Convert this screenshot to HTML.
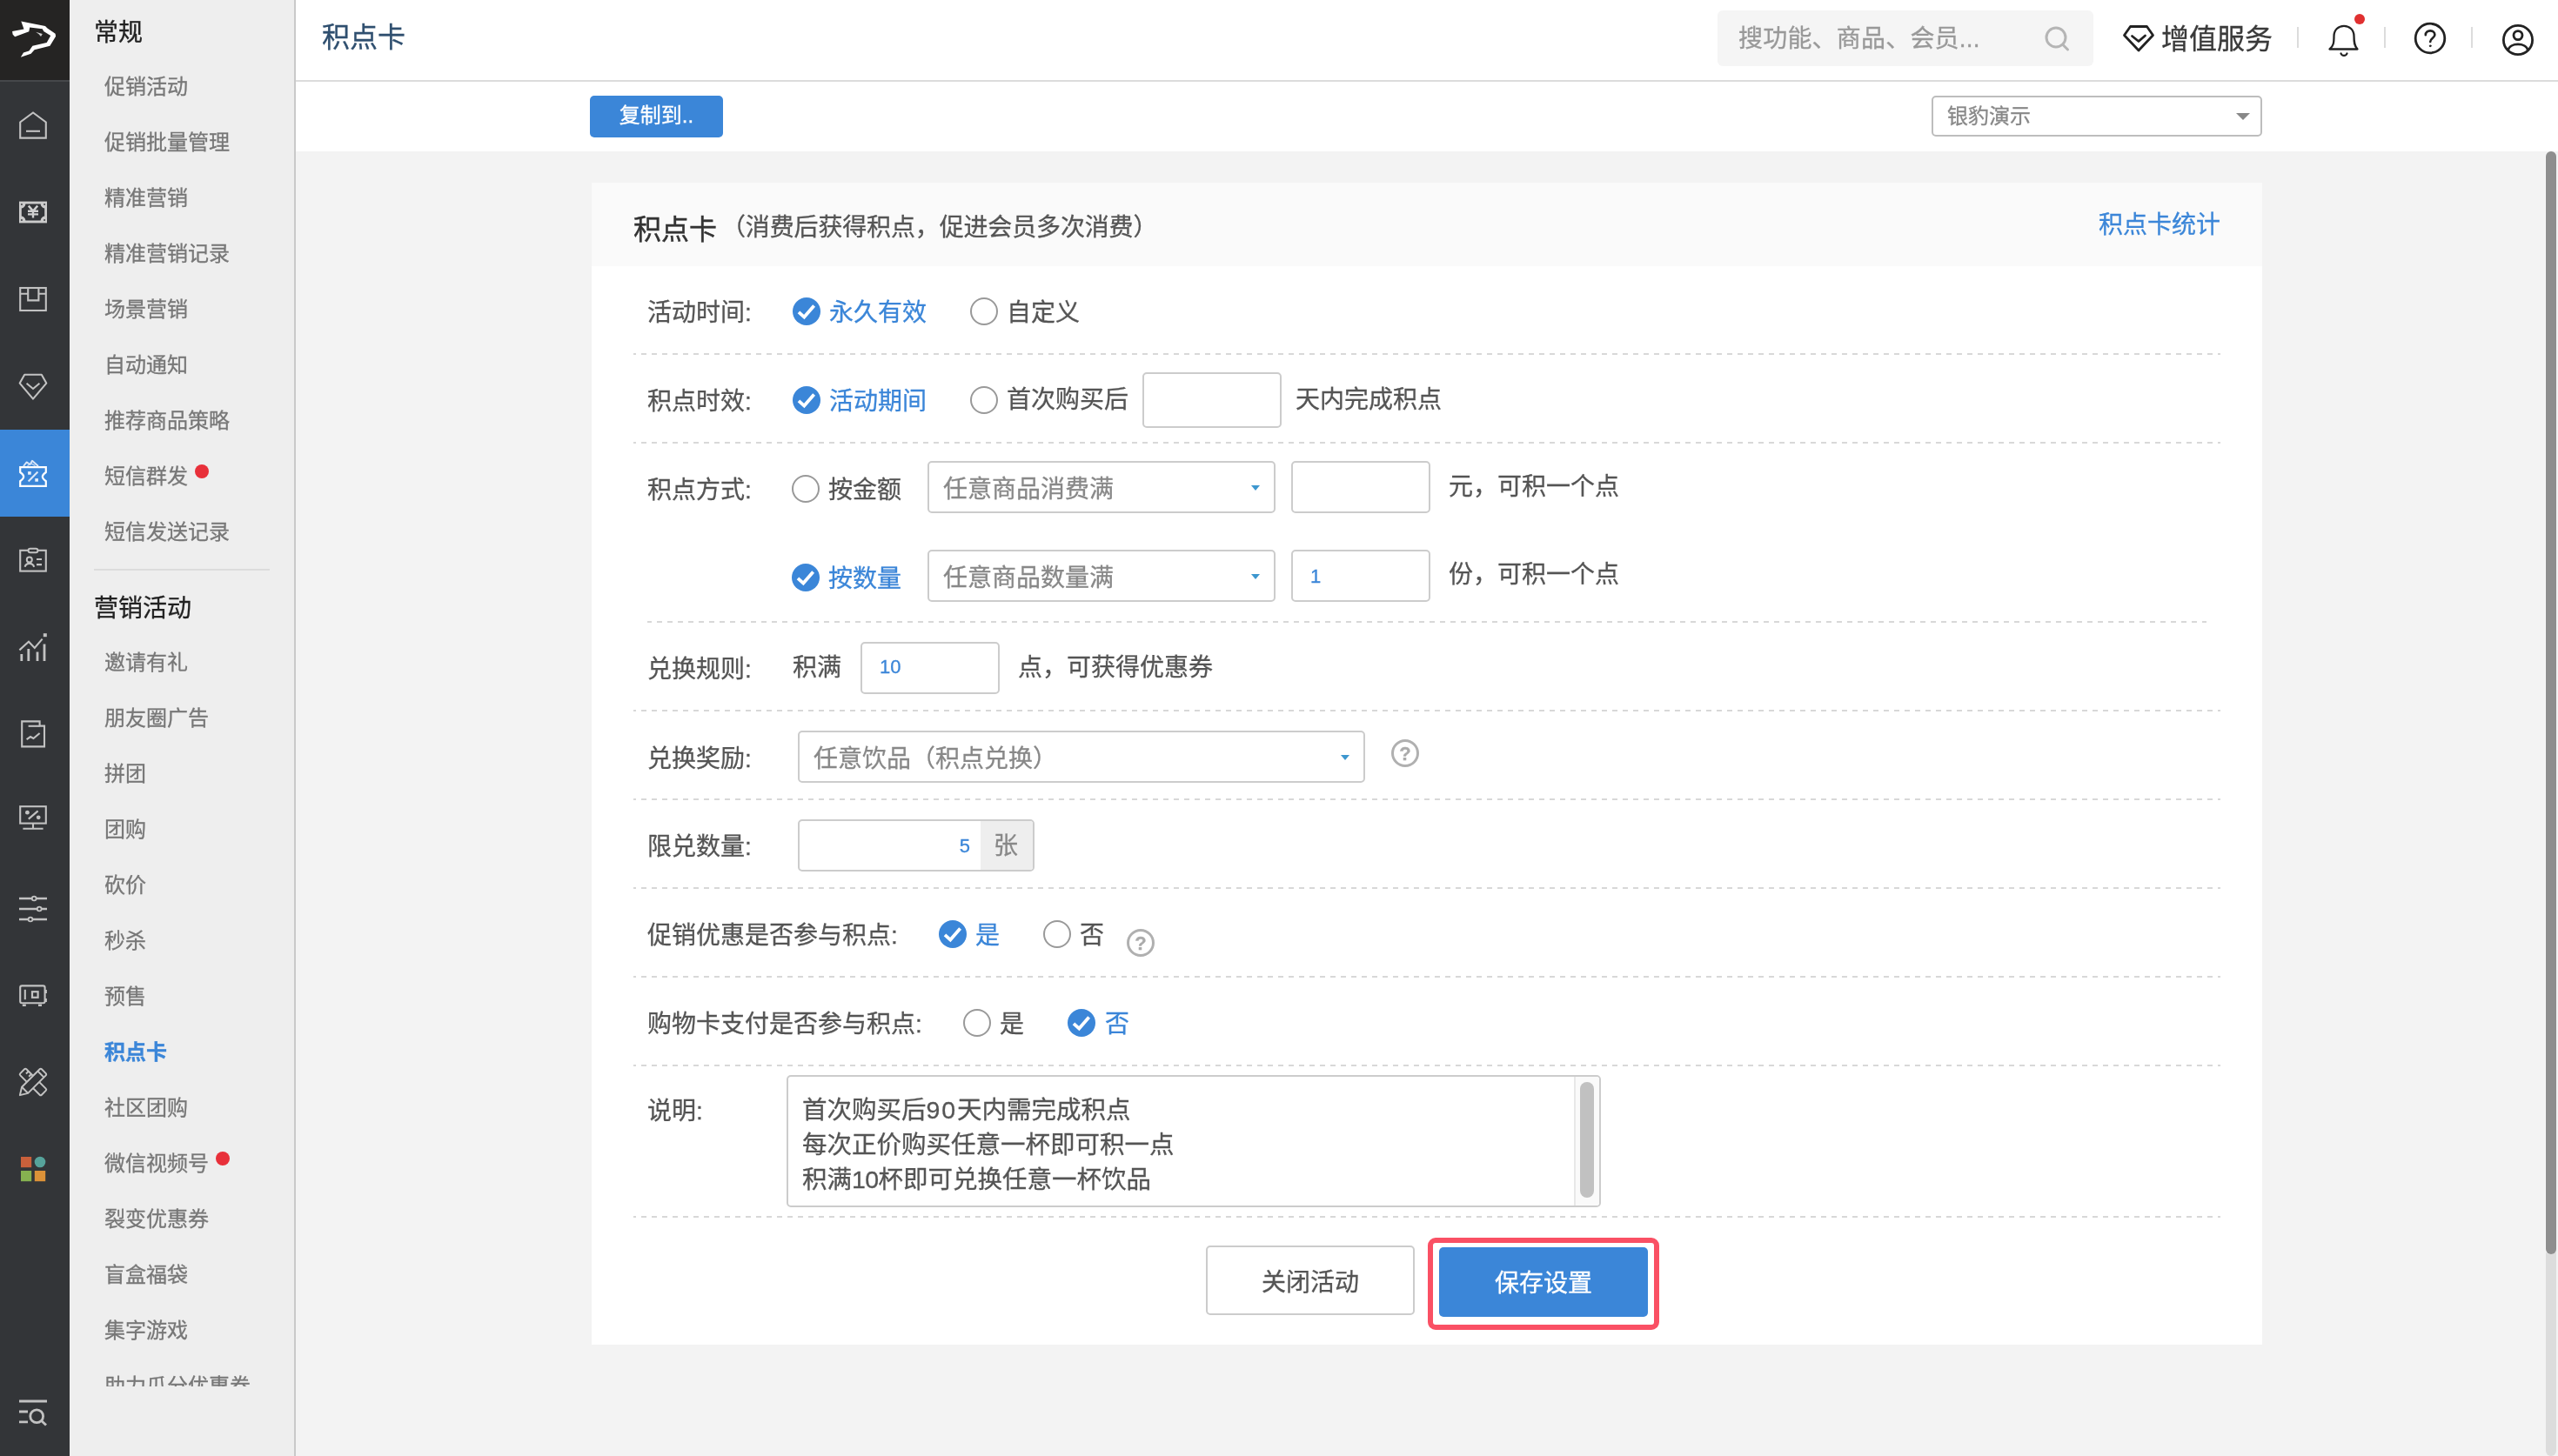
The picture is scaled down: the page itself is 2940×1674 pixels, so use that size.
<!DOCTYPE html>
<html lang="zh-CN">
<head>
<meta charset="utf-8">
<title>积点卡</title>
<style>
*{box-sizing:border-box;margin:0;padding:0}
html,body{width:2940px;height:1674px;overflow:hidden;background:#f3f3f3}
body{font-family:"Liberation Sans","Noto Sans CJK SC",sans-serif;color:#555;font-size:28px;position:relative;will-change:transform;-webkit-text-stroke:0.3px}
.abs,.t,.dash,.rc,.ru,.inp,.sel{position:absolute}
.t{white-space:nowrap;height:40px;line-height:40px}
#nav1{position:absolute;left:0;top:0;width:80px;height:1674px;background:#333538}
#logo{position:absolute;left:0;top:0;width:80px;height:92px;background:#252423}
#logoline{position:absolute;left:0;top:92px;width:80px;height:2px;background:#46484b}
#act{position:absolute;left:0;top:494px;width:80px;height:100px;background:#3b86d8}
#nav2{position:absolute;left:80px;top:0;width:260px;height:1674px;background:#eeeeee;border-right:2px solid #c9c9c9}
#nav2clip{position:absolute;left:0;top:0;width:258px;height:1594px;overflow:hidden}
.h{position:absolute;left:28px;font-size:28px;color:#222;height:40px;line-height:40px;white-space:nowrap}
.i{position:absolute;left:40px;font-size:24px;color:#777;height:36px;line-height:36px;white-space:nowrap}
.i.on{color:#3b86d8;font-weight:bold}
.dot{position:absolute;width:16px;height:16px;border-radius:50%;background:#e8303a}
#hdr{position:absolute;left:340px;top:0;width:2600px;height:92px;background:#fff}
#hdrline{position:absolute;left:340px;top:92px;width:2600px;height:2px;background:#dcdcdc}
#tool{position:absolute;left:340px;top:94px;width:2600px;height:80px;background:#fff}
#card{position:absolute;left:680px;top:210px;width:1920px;height:1336px;background:#fff}
#cardh{position:absolute;left:680px;top:210px;width:1920px;height:96px;background:#fafafa}
.dash{height:2px;background-image:linear-gradient(90deg,#d8d8d8 6px,transparent 6px);background-size:12px 2px;background-position:9px 0;left:728px;width:1824px}
.rc{width:32px;height:32px}
.ru{width:32px;height:32px;border-radius:50%;border:2px solid #999;background:#fff}
.inp{border:2px solid #ccc;border-radius:5px;background:#fff}
.sel{border:2px solid #ccc;border-radius:5px;background:#fff;color:#888;font-size:28px;white-space:nowrap}
.sel span{position:absolute;left:16px;top:2px}
.sel i{position:absolute;right:16px;width:0;height:0;border-left:5.5px solid transparent;border-right:5.5px solid transparent;border-top:6.5px solid #3d97cf}
.b{color:#3b86d8}
.num{font-size:22px;color:#3b86d8}
svg{position:absolute;overflow:visible}
</style>
</head>
<body>
<div id="nav1">
<div id="logo"></div><div id="logoline"></div><div id="act"></div>
<svg width="80" height="1674" viewBox="0 0 80 1674" fill="none" stroke="#c2c2c2" stroke-width="2.1" style="left:0;top:0">
<g stroke="none" fill="#fff" style="filter:blur(0.45px)"><path d="M14.1 36.0 L27.5 33.4 L24.3 24.4 L31.7 26.1 L52.0 30.0 L54.5 32.4 L63.6 38.8 L64.1 41.7 L57.4 52.8 L39.6 57.3 L35.6 61.7 L23.8 65.8 L27.0 60.6 L33.4 58.4 L37.4 52.8 L53.7 48.9 L58.2 41.1 L50.2 35.9 L48.8 33.2 L34.2 31.4 L33.3 36.3 L17.1 42.3 L14.6 39.6 Z"/><path d="M41.1 36.7 L48.8 39.0 L47.0 41.9 L44.6 39.2 Z" fill="#cfcfcf"/></g>
<path d="M23.2 158.6 V140.5 L38 129.5 L52.8 140.5 V158.6 Z"/><path d="M30 150.8 H46"/>
<rect x="22" y="231.6" width="32" height="24.8" fill="#cbcbcb" stroke="none"/><path d="M29.4 234.4 H46.6 Q47.2 238.6 51.2 239.4 V248.6 Q47.2 249.4 46.6 253.6 H29.4 Q28.8 249.4 24.8 248.6 V239.4 Q28.8 238.6 29.4 234.4 Z" fill="#333538" stroke="none"/><g fill="#4a4c4f" stroke="none"><circle cx="24.9" cy="235" r="1.1"/><circle cx="51.1" cy="235" r="1.1"/><circle cx="24.9" cy="253" r="1.1"/><circle cx="51.1" cy="253" r="1.1"/></g><path d="M32.8 236.6 L38 242.6 L43.2 236.6 M32 242.8 H44 M32 246.4 H44 M38 242.6 V250.4" stroke-width="2.4" stroke="#d0d0d0"/>
<rect x="23.2" y="331" width="29.6" height="26"/><path d="M23.2 337.8 H32 M44.6 337.8 H52.8 M32.2 331 V345.4 H44.4 V331"/>
<path d="M28.2 430.8 H47.8 L53.3 440.6 L38 458.6 L22.7 440.6 Z" stroke-linejoin="round"/><path d="M30.6 440.8 L38 447 L45.4 440.8"/>
<g stroke="#fff" stroke-width="2.2"><path d="M23.2 537.2 H52.8 V543 Q44.8 548.1 52.8 553.2 V558.8 H23.2 V553.2 Q31.2 548.1 23.2 543 Z"/><path d="M27 536 L30.6 531.4 L34.6 534 L37 529.8 L44 536" stroke-width="1.9" stroke="#d9e6f8" stroke-linejoin="round"/><path d="M31.5 535.5 L36 533 L40.5 535.5" stroke-width="1.4" stroke="#c9dcf5"/><path d="M32.6 553.6 L43.4 542.6" stroke-width="2.1" stroke="#dbe8f8"/><rect x="32.1" y="542.1" width="3.6" height="3.6" fill="#e9f1fb" stroke="none"/><rect x="40.3" y="550.1" width="3.6" height="3.6" fill="#e9f1fb" stroke="none"/></g>
<rect x="23.2" y="632.8" width="29.6" height="23.8"/><rect x="32.6" y="630.8" width="10.8" height="4.4" rx="2.2" fill="#333538" stroke-width="2"/><circle cx="33.8" cy="643.4" r="3" stroke-width="2"/><path d="M28.6 651.8 C30.2 646.6 37.4 646.6 39.2 651.8" stroke-width="2.1"/><path d="M42 643 H48 M42 649.2 H48" stroke-width="2.2"/>
<path d="M24.8 760 V752 M32.8 760 V746 M43 760 V749.4 M51 760 V740.4" stroke-width="2.8"/><path d="M22.4 747.4 L33 737.8 L39.8 745 L48.6 734.6"/><rect x="49.8" y="728.2" width="4" height="4" fill="#c2c2c2" stroke="none"/>
<path d="M25.2 829.4 H45.6 V834.6 H51 V858.4 H25.2 Z"/><path d="M32.6 834.8 H45.6"/><path d="M30.6 850.2 L35 847 L38.4 849 L45.6 843" stroke-width="2.2"/>
<rect x="23.2" y="927.2" width="29.6" height="19.4"/><path d="M38 946.6 V952.6 M26.4 952.8 H49.6"/><path d="M32.8 941.6 L43.6 932.4" stroke-width="2.2"/><circle cx="31.4" cy="934.2" r="2.4" fill="#c2c2c2" stroke="none"/><circle cx="44.2" cy="939.8" r="2.4" fill="#c2c2c2" stroke="none"/>
<path d="M22 1033 H54 M22 1045 H54 M22 1057 H54" stroke-width="2.6"/><circle cx="39.2" cy="1033" r="2.4" fill="#333538" stroke-width="1.8"/><circle cx="45.2" cy="1045" r="2.4" fill="#333538" stroke-width="1.8"/><circle cx="35" cy="1057" r="2.4" fill="#333538" stroke-width="1.8"/>
<rect x="23.2" y="1133.4" width="28.4" height="19.8" rx="2"/><path d="M28.8 1137.8 V1149.2"/><rect x="37" y="1140.2" width="6.6" height="6.6" stroke-width="2.2"/><path d="M27.8 1154.6 V1157 M46 1154.6 V1157" stroke-width="4"/><path d="M52.8 1138 V1142 M52.8 1148 V1152" stroke-width="2.2"/>
<g stroke-width="2" stroke-linejoin="round"><g transform="rotate(45 38 1244)"><rect x="20.6" y="1239" width="34.8" height="10" rx="1.6"/><path d="M25.6 1239 V1243 M30.2 1239 V1243"/></g><g transform="rotate(-45 38 1244)"><path d="M24.8 1239 H53.8 a1.6 1.6 0 0 1 1.6 1.6 V1247.4 a1.6 1.6 0 0 1 -1.6 1.6 H24.8 L16.6 1244 Z" fill="#333538"/><path d="M24.8 1239 V1249 M50.6 1239 V1249"/></g></g>
<g stroke="none"><rect x="24" y="1330" width="12.2" height="12.2" fill="#c9603b"/><circle cx="46" cy="1336" r="6.3" fill="#56a39b"/><rect x="24" y="1346" width="12.2" height="12.2" fill="#86b150"/><rect x="39.8" y="1346" width="12.4" height="12.2" fill="#dc9238"/></g>
<path d="M22 1611 H54 M22 1623 H32 M22 1634.8 H32" stroke-width="2.8"/><circle cx="42.2" cy="1628.2" r="7.4" stroke-width="2.8"/><path d="M47.6 1633.4 L53 1638.6" stroke-width="2.8"/>
</svg>
</div>
<div id="nav2"><div id="nav2clip">
<div class="h" style="top:18px">常规</div>
<div class="i" style="top:82px">促销活动</div>
<div class="i" style="top:146px">促销批量管理</div>
<div class="i" style="top:210px">精准营销</div>
<div class="i" style="top:274px">精准营销记录</div>
<div class="i" style="top:338px">场景营销</div>
<div class="i" style="top:402px">自动通知</div>
<div class="i" style="top:466px">推荐商品策略</div>
<div class="i" style="top:530px">短信群发</div>
<div class="i" style="top:594px">短信发送记录</div>
<div class="dot" style="left:144px;top:534px"></div>
<div class="abs" style="left:28px;top:654px;width:202px;height:2px;background:#dcdcdc"></div>
<div class="h" style="top:680px">营销活动</div>
<div class="i" style="top:744px">邀请有礼</div>
<div class="i" style="top:808px">朋友圈广告</div>
<div class="i" style="top:872px">拼团</div>
<div class="i" style="top:936px">团购</div>
<div class="i" style="top:1000px">砍价</div>
<div class="i" style="top:1064px">秒杀</div>
<div class="i" style="top:1128px">预售</div>
<div class="i on" style="top:1192px">积点卡</div>
<div class="i" style="top:1256px">社区团购</div>
<div class="i" style="top:1320px">微信视频号</div>
<div class="i" style="top:1384px">裂变优惠券</div>
<div class="i" style="top:1448px">盲盒福袋</div>
<div class="i" style="top:1512px">集字游戏</div>
<div class="i" style="top:1576px">助力瓜分优惠券</div>
<div class="dot" style="left:168px;top:1324px"></div>
</div></div>
<div id="hdr"></div><div id="hdrline"></div>
<div class="t" style="left:370px;top:23px;font-size:32px;color:#2f4f6f">积点卡</div>
<div class="abs" style="left:1974px;top:12px;width:432px;height:64px;background:#f5f5f5;border-radius:6px"></div>
<div class="t" style="left:1998px;top:25px;font-size:28px;color:#999;letter-spacing:0.2px">搜功能、商品、会员...</div>
<svg width="40" height="40" viewBox="0 0 40 40" style="left:2344px;top:23.5px" fill="none" stroke="#b5b5b5" stroke-width="3"><circle cx="19" cy="19" r="11"/><path d="M27 27.5 L32.5 33" stroke-linecap="round"/></svg>
<svg width="40" height="36" viewBox="0 0 40 36" style="left:2438px;top:26px" fill="none" stroke="#222" stroke-width="2.8" stroke-linejoin="round" stroke-linecap="round"><path d="M10.5 4.5 H29.5 L36.5 14.5 L20 32 L3.5 14.5 Z"/><path d="M12.5 15.5 L20 21.5 L27.5 15"/></svg>
<div class="t" style="left:2484px;top:25px;font-size:32px;color:#3a3a3a">增值服务</div>
<div class="abs" style="left:2640px;top:31px;width:2px;height:24px;background:#dcdcdc"></div>
<div class="abs" style="left:2740px;top:31px;width:2px;height:24px;background:#dcdcdc"></div>
<div class="abs" style="left:2840px;top:31px;width:2px;height:24px;background:#dcdcdc"></div>
<svg width="40" height="44" viewBox="0 0 40 44" style="left:2674px;top:25px" fill="none" stroke="#222" stroke-width="2.3" stroke-linejoin="round" stroke-linecap="round"><path d="M4.5 31.5 H35.5 C32 28 31.5 24 31.5 16.5 C31.5 9.5 26.5 4.8 20 4.8 C13.5 4.8 8.5 9.5 8.5 16.5 C8.5 24 8 28 3.5 31.5 Z"/><path d="M16.5 36.5 C17.5 39.6 22.5 39.6 23.5 36.5"/></svg>
<div class="abs" style="left:2706px;top:16px;width:12px;height:12px;border-radius:50%;background:#e03030"></div>
<svg width="40" height="40" viewBox="0 0 40 40" style="left:2773px;top:24px" fill="none" stroke="#222" stroke-width="2.8" stroke-linecap="round"><circle cx="20" cy="20" r="16.8"/><path d="M14.8 16.2 C14.8 9.8 25.4 9.8 25.4 16 C25.4 19.6 20.2 19.8 20.2 24" stroke-width="2.6"/><circle cx="20.2" cy="28.8" r="0.9" fill="#222" stroke-width="1"/></svg>
<svg width="40" height="40" viewBox="0 0 40 40" style="left:2874px;top:26px" fill="none" stroke="#222" stroke-width="2.8"><circle cx="20" cy="20" r="16.6"/><circle cx="20" cy="14.6" r="5"/><path d="M8.6 31.8 C10.5 22.6 29.5 22.6 31.4 31.8"/></svg>
<div id="tool"></div>
<div class="abs" style="left:678px;top:110px;width:153px;height:48px;background:#3b86d8;border-radius:5px;color:#fff;font-size:24px;line-height:46px;text-align:center">复制到..</div>
<div class="sel" style="left:2220px;top:110px;width:380px;height:47px;border-color:#bdbdbd;font-size:24px;line-height:39px"><span>银豹演示</span><i style="top:18px;right:12px;border-left-width:8px;border-right-width:8px;border-top:8px solid #888"></i></div>
<div class="abs" style="left:2926px;top:174px;width:12px;height:1500px;border-radius:6px;background:#dcdcdc"></div>
<div class="abs" style="left:2926px;top:174px;width:12px;height:1268px;border-radius:6px;background:#8e8e8e;box-shadow:-1px 0 0 #f8f8f8"></div>
<div id="card"></div><div id="cardh"></div>
<div class="t" style="left:728px;top:244px;font-size:32px;color:#333;-webkit-text-stroke:0.45px #333">积点卡</div>
<div class="t" style="left:829px;top:242px;font-size:28px;color:#555;letter-spacing:-0.15px">（消费后获得积点，促进会员多次消费）</div>
<div class="t b" style="left:2412px;top:239px;font-size:28px">积点卡统计</div>
<div class="t" style="left:744px;top:340px;">活动时间:</div>
<svg class="rc" width="32" height="32" viewBox="0 0 32 32" style="left:911px;top:342px"><circle cx="16" cy="16" r="16" fill="#3b86d8"/><path d="M7 16.8 L13.3 22.6 L24.6 9.6" fill="none" stroke="#fff" stroke-width="3.8"/></svg>
<div class="t b" style="left:953px;top:340px;">永久有效</div>
<div class="ru" style="left:1115px;top:342px"></div>
<div class="t" style="left:1157px;top:340px;">自定义</div>
<div class="dash" style="top:406px;left:728px;width:1824px;background-position:9px 0"></div>
<div class="t" style="left:744px;top:442px;">积点时效:</div>
<svg class="rc" width="32" height="32" viewBox="0 0 32 32" style="left:911px;top:444px"><circle cx="16" cy="16" r="16" fill="#3b86d8"/><path d="M7 16.8 L13.3 22.6 L24.6 9.6" fill="none" stroke="#fff" stroke-width="3.8"/></svg>
<div class="t b" style="left:953px;top:442px;">活动期间</div>
<div class="ru" style="left:1115px;top:444px"></div>
<div class="t" style="left:1157px;top:440px;">首次购买后</div>
<div class="inp" style="left:1313px;top:428px;width:160px;height:64px"></div>
<div class="t" style="left:1489px;top:440px;">天内完成积点</div>
<div class="dash" style="top:508px;left:728px;width:1824px;background-position:9px 0"></div>
<div class="t" style="left:744px;top:544px;">积点方式:</div>
<div class="ru" style="left:910px;top:546px"></div>
<div class="t" style="left:952px;top:544px;">按金额</div>
<div class="sel" style="left:1066px;top:530px;width:400px;height:60px;line-height:58px"><span>任意商品消费满</span><i style="top:26px"></i></div>
<div class="inp" style="left:1484px;top:530px;width:160px;height:60px"></div>
<div class="t" style="left:1665px;top:540px;">元，可积一个点</div>
<svg class="rc" width="32" height="32" viewBox="0 0 32 32" style="left:910px;top:648px"><circle cx="16" cy="16" r="16" fill="#3b86d8"/><path d="M7 16.8 L13.3 22.6 L24.6 9.6" fill="none" stroke="#fff" stroke-width="3.8"/></svg>
<div class="t b" style="left:952px;top:646px;">按数量</div>
<div class="sel" style="left:1066px;top:632px;width:400px;height:60px;line-height:58px"><span>任意商品数量满</span><i style="top:26px"></i></div>
<div class="inp" style="left:1484px;top:632px;width:160px;height:60px"></div>
<div class="t num" style="left:1506px;top:643px;">1</div>
<div class="t" style="left:1665px;top:641px;">份，可积一个点</div>
<div class="dash" style="top:714px;left:744px;width:1792px;background-position:11px 0"></div>
<div class="t" style="left:744px;top:750px;">兑换规则:</div>
<div class="t" style="left:911px;top:748px;">积满</div>
<div class="inp" style="left:989px;top:738px;width:160px;height:60px"></div>
<div class="t num" style="left:1011px;top:747px;">10</div>
<div class="t" style="left:1170px;top:748px;">点，可获得优惠券</div>
<div class="dash" style="top:816px;left:728px;width:1824px;background-position:9px 0"></div>
<div class="t" style="left:744px;top:853px;">兑换奖励:</div>
<div class="sel" style="left:917px;top:840px;width:652px;height:60px;line-height:58px"><span>任意饮品（积点兑换）</span><i style="top:26px"></i></div>
<div class="abs" style="left:1599px;top:850px;width:32px;height:32px;border-radius:50%;border:3px solid #b0b0b0;color:#aaa;font-size:22px;font-weight:bold;line-height:27px;text-align:center;background:#fff">?</div>
<div class="dash" style="top:918px;left:728px;width:1824px;background-position:9px 0"></div>
<div class="t" style="left:744px;top:954px;">限兑数量:</div>
<div class="inp" style="left:917px;top:942px;width:272px;height:60px;overflow:hidden"><div class="abs" style="right:0;top:0;width:60px;height:56px;background:#eee;color:#888;text-align:center;line-height:58px;font-size:28px;text-indent:-2px">张</div></div>
<div class="t num" style="left:1015px;top:953px;width:100px;text-align:right">5</div>
<div class="dash" style="top:1020px;left:728px;width:1824px;background-position:9px 0"></div>
<div class="t" style="left:744px;top:1056px;">促销优惠是否参与积点:</div>
<svg class="rc" width="32" height="32" viewBox="0 0 32 32" style="left:1079px;top:1058px"><circle cx="16" cy="16" r="16" fill="#3b86d8"/><path d="M7 16.8 L13.3 22.6 L24.6 9.6" fill="none" stroke="#fff" stroke-width="3.8"/></svg>
<div class="t b" style="left:1121px;top:1056px;">是</div>
<div class="ru" style="left:1199px;top:1058px"></div>
<div class="t" style="left:1241px;top:1056px;">否</div>
<div class="abs" style="left:1295px;top:1068px;width:32px;height:32px;border-radius:50%;border:3px solid #b0b0b0;color:#aaa;font-size:22px;font-weight:bold;line-height:27px;text-align:center;background:#fff">?</div>
<div class="dash" style="top:1122px;left:728px;width:1824px;background-position:9px 0"></div>
<div class="t" style="left:744px;top:1158px;">购物卡支付是否参与积点:</div>
<div class="ru" style="left:1107px;top:1160px"></div>
<div class="t" style="left:1149px;top:1158px;">是</div>
<svg class="rc" width="32" height="32" viewBox="0 0 32 32" style="left:1227px;top:1160px"><circle cx="16" cy="16" r="16" fill="#3b86d8"/><path d="M7 16.8 L13.3 22.6 L24.6 9.6" fill="none" stroke="#fff" stroke-width="3.8"/></svg>
<div class="t b" style="left:1270px;top:1158px;">否</div>
<div class="dash" style="top:1224px;left:728px;width:1824px;background-position:9px 0"></div>
<div class="t" style="left:744px;top:1258px;">说明:</div>
<div class="inp" style="left:904px;top:1236px;width:936px;height:152px;overflow:hidden"><div class="abs" style="left:16px;top:18px;line-height:40px;font-size:28.5px;white-space:nowrap;color:#555">首次购买后<span style="letter-spacing:1.9px">90</span>天内需完成积点<br>每次正价购买任意一杯即可积一点<br>积满<span style="letter-spacing:-0.6px">10</span>杯即可兑换任意一杯饮品</div><div class="abs" style="right:0;top:0;width:29px;height:148px;background:#fafafa;border-left:2px solid #e8e8e8"></div><div class="abs" style="right:6px;top:6px;width:16px;height:133px;border-radius:8px;background:#c1c1c1"></div></div>
<div class="dash" style="top:1398px;left:728px;width:1824px;background-position:9px 0"></div>
<div class="abs" style="left:1386px;top:1432px;width:240px;height:80px;border:2px solid #ccc;border-radius:5px;background:#fff;color:#555;font-size:28px;line-height:82px;text-align:center">关闭活动</div>
<div class="abs" style="left:1641px;top:1423px;width:266px;height:106px;border:6px solid #fa5064;border-radius:9px"></div>
<div class="abs" style="left:1654px;top:1434px;width:240px;height:80px;border-radius:5px;background:#3b86d8;color:#fff;font-size:28px;line-height:83px;text-align:center">保存设置</div>
</body>
</html>
